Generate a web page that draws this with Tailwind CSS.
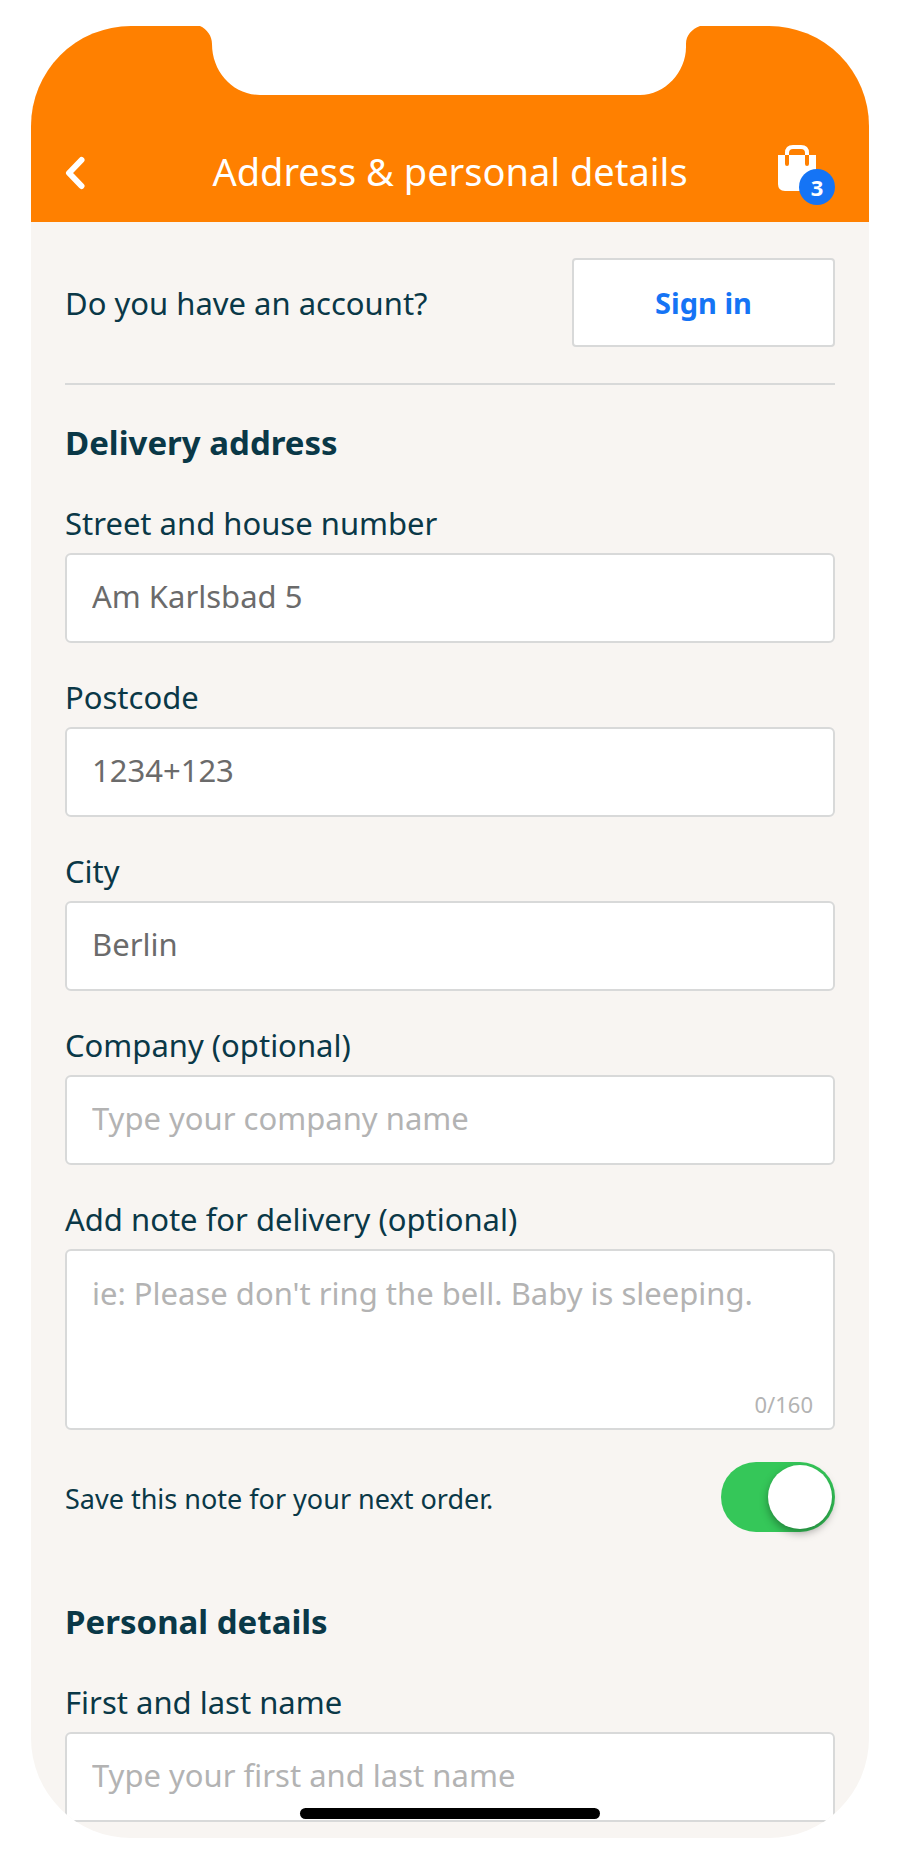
<!DOCTYPE html>
<html lang="en">
<head>
  <meta charset="UTF-8" />
  <meta name="viewport" content="width=device-width, initial-scale=1.0"/>
  <title>Address &amp; personal details</title>
  <script src="https://cdn.jsdelivr.net/npm/@tailwindcss/browser@4"></script>
</head>
<body class="bg-white px-[31px] py-[26px] font-['Noto_Sans',sans-serif] text-[#0a3847]">
  <div class="relative w-full overflow-hidden rounded-[100px] bg-[#f8f5f2]">

    <!-- Header -->
    <header class="relative bg-[#ff8000] px-[34px] pt-[119px] pb-[21px] text-white">
      <!-- Notch -->
      <svg class="absolute top-0 left-1/2 -translate-x-1/2" width="500" height="69" viewBox="0 0 500 69" fill="#fff" aria-hidden="true">
        <path d="M0 0C7 3 12 10 12 18C12 46 33 69 60 69H440C465 69 486 46 486 21V18C486 9 492 3 500 0Z"/>
      </svg>
      <div class="grid h-14 grid-cols-[57px_1fr_57px] items-center">
        <a href="#" aria-label="Back">
          <svg width="20" height="34" viewBox="0 0 20 34" fill="none" stroke="#fff" stroke-width="6" stroke-linecap="round" stroke-linejoin="round">
            <path d="M16.500 4L4 17L16.500 30"/>
          </svg>
        </a>
        <h1 class="pb-1 text-center text-[38px] leading-13 whitespace-nowrap">Address &amp; personal details</h1>
        <a href="#" class="relative block h-14" aria-label="Basket, 3 items">
          <svg width="38" height="46" viewBox="0 0 38 46" fill="none">
            <path d="M0 10H38V39Q38 46 31 46H7Q0 46 0 39Z" fill="#fff"/>
            <path d="M9 19V10M29 19V10" stroke="#ff8000" stroke-width="4" stroke-linecap="round"/>
            <path d="M9 10V8Q9 2 15 2H23Q29 2 29 8V10" stroke="#fff" stroke-width="4"/>
          </svg>
          <span class="absolute right-0 -bottom-1 flex size-9 items-center justify-center rounded-full bg-[#1574f5] text-[22px] leading-9 font-bold">3</span>
        </a>
      </div>
    </header>

    <main class="px-[34px] pt-9 pb-4">
      <div class="flex items-center justify-between border-b-2 border-[#d8d9d9] pb-9">
        <p class="text-[31px] leading-10">Do you have an account?</p>
        <button type="button" class="h-[89px] w-[263px] rounded-[4px] border-2 border-[#d8d9d9] bg-white text-[29px] font-bold text-[#1574f5]">Sign in</button>
      </div>

      <form class="text-[31px] leading-9">
        <h2 class="mt-10 text-[33px] leading-9 font-bold">Delivery address</h2>

        <div class="mt-11">
          <label for="street" class="block">Street and house number</label>
          <input type="text" id="street" value="Am Karlsbad 5"
                 class="mt-3 block h-[90px] w-full rounded-md border-2 border-[#d8d9d9] bg-white px-[25px] pb-1 text-[#6b6b6b]"/>
        </div>

        <div class="mt-9">
          <label for="postcode" class="block">Postcode</label>
          <input type="text" id="postcode" value="1234+123"
                 class="mt-3 block h-[90px] w-full rounded-md border-2 border-[#d8d9d9] bg-white px-[25px] pb-1 text-[#6b6b6b]"/>
        </div>

        <div class="mt-9">
          <label for="city" class="block">City</label>
          <input type="text" id="city" value="Berlin"
                 class="mt-3 block h-[90px] w-full rounded-md border-2 border-[#d8d9d9] bg-white px-[25px] pb-1 text-[#6b6b6b]"/>
        </div>

        <div class="mt-9">
          <label for="company" class="block">Company (optional)</label>
          <input type="text" id="company" placeholder="Type your company name"
                 class="mt-3 block h-[90px] w-full rounded-md border-2 border-[#d8d9d9] bg-white px-[25px] pb-1 placeholder:text-[#b3b3b3]"/>
        </div>

        <div class="mt-9">
          <label for="note" class="block">Add note for delivery (optional)</label>
          <div class="relative mt-3">
            <textarea id="note" maxlength="160" placeholder="ie: Please don't ring the bell. Baby is sleeping."
                      class="block h-[181px] w-full resize-none rounded-md border-2 border-[#d8d9d9] bg-white px-[25px] py-6 placeholder:text-[#b3b3b3]"></textarea>
            <span class="absolute right-[22px] bottom-3 text-[22px] leading-7 text-[#b3b3b3]">0/160</span>
          </div>
        </div>

        <div class="mt-8 flex items-center justify-between">
          <label for="save" class="pt-1 text-[27px] leading-10">Save this note for your next order.</label>
          <input type="checkbox" id="save" role="switch" checked
                 class="flex h-[70px] w-[114px] appearance-none items-center rounded-full bg-gray-300 px-[3px] before:size-16 before:rounded-full before:bg-white before:shadow-[0_4px_8px_rgba(0,0,0,0.35)] checked:justify-end checked:bg-[#35c759]"/>
        </div>

        <h2 class="mt-18 text-[33px] leading-9 font-bold">Personal details</h2>

        <div class="mt-11">
          <label for="name" class="block">First and last name</label>
          <input type="text" id="name" placeholder="Type your first and last name"
                 class="mt-3 block h-[90px] w-full rounded-md border-2 border-[#d8d9d9] bg-white px-[25px] pb-1 placeholder:text-[#b3b3b3]"/>
        </div>
      </form>
    </main>

    <!-- Home indicator -->
    <div class="absolute bottom-[19px] left-1/2 h-[11px] w-[300px] -translate-x-1/2 rounded-full bg-black"></div>
  </div>
</body>
</html>
